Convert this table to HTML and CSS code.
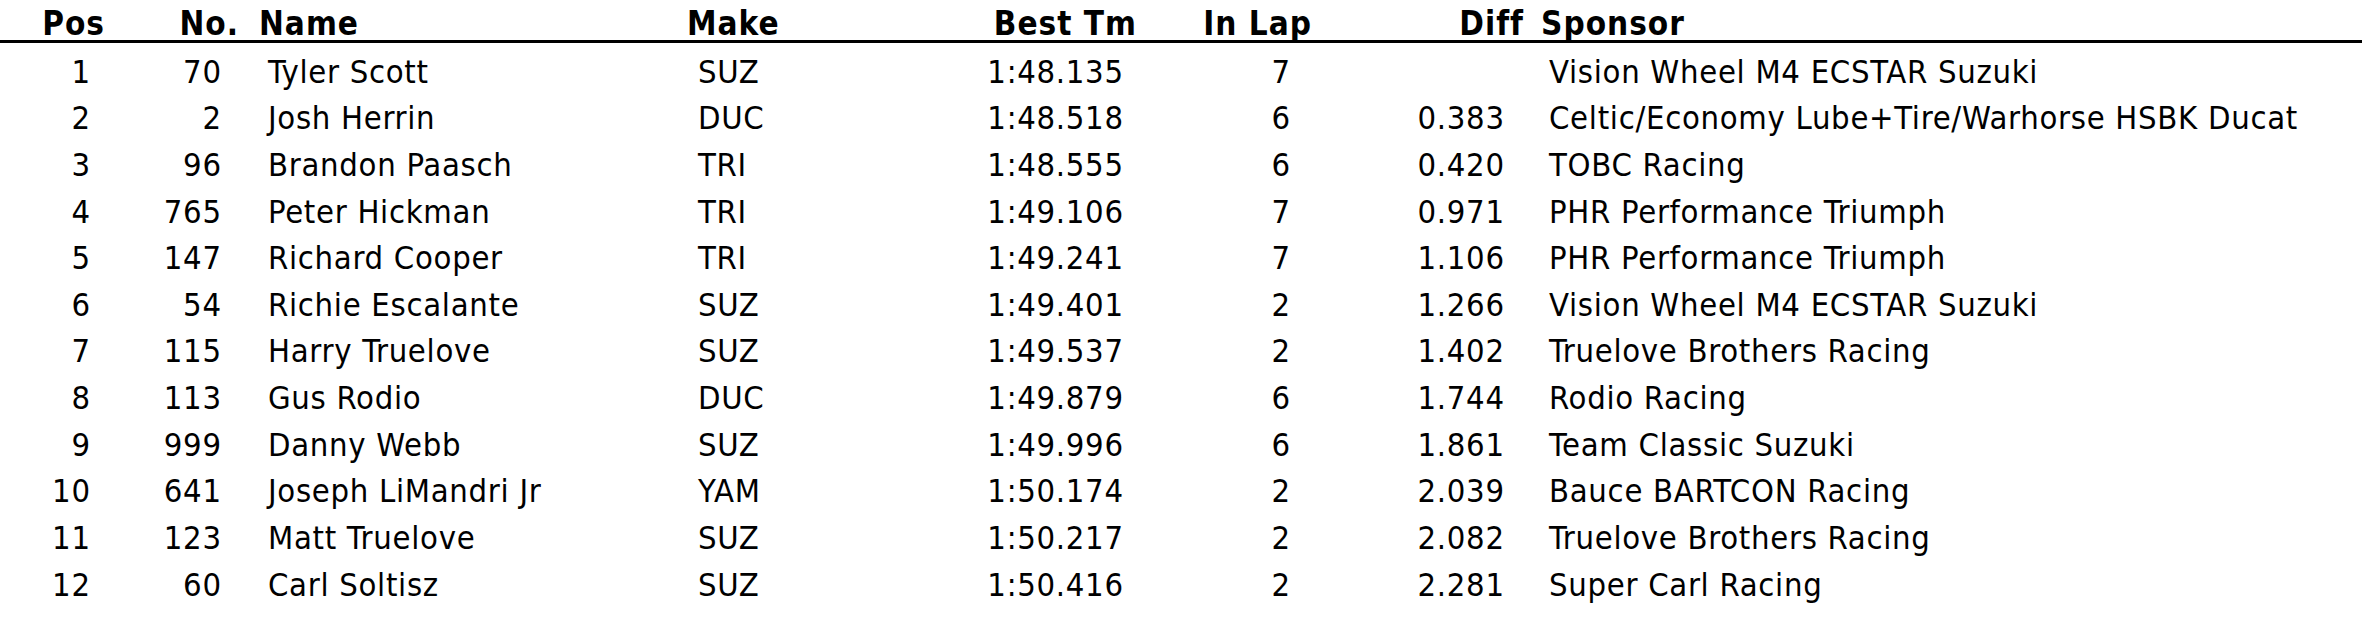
FILE: index.html
```html
<!DOCTYPE html>
<html>
<head>
<meta charset="utf-8">
<link rel="stylesheet" href="styles.css">
</head>
<body>
<div class="results">
  <div class="row head">
    <div class="c pos">Pos</div>
    <div class="c no">No.</div>
    <div class="c name">Name</div>
    <div class="c make">Make</div>
    <div class="c best">Best Tm</div>
    <div class="c lap">In Lap</div>
    <div class="c diff">Diff</div>
    <div class="c spon">Sponsor</div>
  </div>
  <div class="body">
    <div class="row"><div class="c pos">1</div><div class="c no">70</div><div class="c name">Tyler Scott</div><div class="c make">SUZ</div><div class="c best">1:48.135</div><div class="c lap">7</div><div class="c diff"></div><div class="c spon">Vision Wheel M4 ECSTAR Suzuki</div></div>
    <div class="row"><div class="c pos">2</div><div class="c no">2</div><div class="c name">Josh Herrin</div><div class="c make">DUC</div><div class="c best">1:48.518</div><div class="c lap">6</div><div class="c diff">0.383</div><div class="c spon">Celtic/Economy Lube+Tire/Warhorse HSBK Ducat</div></div>
    <div class="row"><div class="c pos">3</div><div class="c no">96</div><div class="c name">Brandon Paasch</div><div class="c make">TRI</div><div class="c best">1:48.555</div><div class="c lap">6</div><div class="c diff">0.420</div><div class="c spon">TOBC Racing</div></div>
    <div class="row"><div class="c pos">4</div><div class="c no">765</div><div class="c name">Peter Hickman</div><div class="c make">TRI</div><div class="c best">1:49.106</div><div class="c lap">7</div><div class="c diff">0.971</div><div class="c spon">PHR Performance Triumph</div></div>
    <div class="row"><div class="c pos">5</div><div class="c no">147</div><div class="c name">Richard Cooper</div><div class="c make">TRI</div><div class="c best">1:49.241</div><div class="c lap">7</div><div class="c diff">1.106</div><div class="c spon">PHR Performance Triumph</div></div>
    <div class="row"><div class="c pos">6</div><div class="c no">54</div><div class="c name">Richie Escalante</div><div class="c make">SUZ</div><div class="c best">1:49.401</div><div class="c lap">2</div><div class="c diff">1.266</div><div class="c spon">Vision Wheel M4 ECSTAR Suzuki</div></div>
    <div class="row"><div class="c pos">7</div><div class="c no">115</div><div class="c name">Harry Truelove</div><div class="c make">SUZ</div><div class="c best">1:49.537</div><div class="c lap">2</div><div class="c diff">1.402</div><div class="c spon">Truelove Brothers Racing</div></div>
    <div class="row"><div class="c pos">8</div><div class="c no">113</div><div class="c name">Gus Rodio</div><div class="c make">DUC</div><div class="c best">1:49.879</div><div class="c lap">6</div><div class="c diff">1.744</div><div class="c spon">Rodio Racing</div></div>
    <div class="row"><div class="c pos">9</div><div class="c no">999</div><div class="c name">Danny Webb</div><div class="c make">SUZ</div><div class="c best">1:49.996</div><div class="c lap">6</div><div class="c diff">1.861</div><div class="c spon">Team Classic Suzuki</div></div>
    <div class="row"><div class="c pos">10</div><div class="c no">641</div><div class="c name">Joseph LiMandri Jr</div><div class="c make">YAM</div><div class="c best">1:50.174</div><div class="c lap">2</div><div class="c diff">2.039</div><div class="c spon">Bauce BARTCON Racing</div></div>
    <div class="row"><div class="c pos">11</div><div class="c no">123</div><div class="c name">Matt Truelove</div><div class="c make">SUZ</div><div class="c best">1:50.217</div><div class="c lap">2</div><div class="c diff">2.082</div><div class="c spon">Truelove Brothers Racing</div></div>
    <div class="row"><div class="c pos">12</div><div class="c no">60</div><div class="c name">Carl Soltisz</div><div class="c make">SUZ</div><div class="c best">1:50.416</div><div class="c lap">2</div><div class="c diff">2.281</div><div class="c spon">Super Carl Racing</div></div>
  </div>
</div>
</body>
</html>
```

FILE: styles.css
```css
html, body {
  margin: 0;
  padding: 0;
  background: #ffffff;
}

body {
  font-family: "DejaVu Sans Condensed", "DejaVu Sans", Tahoma, sans-serif;
  font-size: 32.5px;
  letter-spacing: 0.7px;
  color: #000000;
}

.results {
  width: 2362px;
}

.row {
  display: grid;
  grid-template-columns: 130px 115px 435px 220px 260px 160px 210px 1fr;
  line-height: 46.64px;
  white-space: nowrap;
}

.pos  { text-align: right; padding-right: 39.3px; }
.no   { text-align: right; padding-right: 23.3px; }
.name { text-align: left;  padding-left: 23px; }
.make { text-align: left;  padding-left: 18px; }
.best { text-align: right; padding-right: 36.3px; }
.lap  { text-align: right; padding-right: 29.3px; }
.diff { text-align: right; padding-right: 25.3px; }
.spon { text-align: left;  padding-left: 19px; }

.head {
  font-weight: bold;
  font-size: 33px;
  letter-spacing: 1px;
  line-height: 32px;
  padding-top: 8px;
  border-bottom: 3px solid #000000;
}

.head .pos  { padding-right: 25px; }
.head .no   { padding-right: 6px; }
.head .name { padding-left: 14px; }
.head .make { padding-left: 7px; }
.head .best { padding-right: 23px; }
.head .lap  { padding-right: 8px; }
.head .diff { padding-right: 6px; }
.head .spon { padding-left: 11px; }

.body {
  padding-top: 5.6px;
}
```
